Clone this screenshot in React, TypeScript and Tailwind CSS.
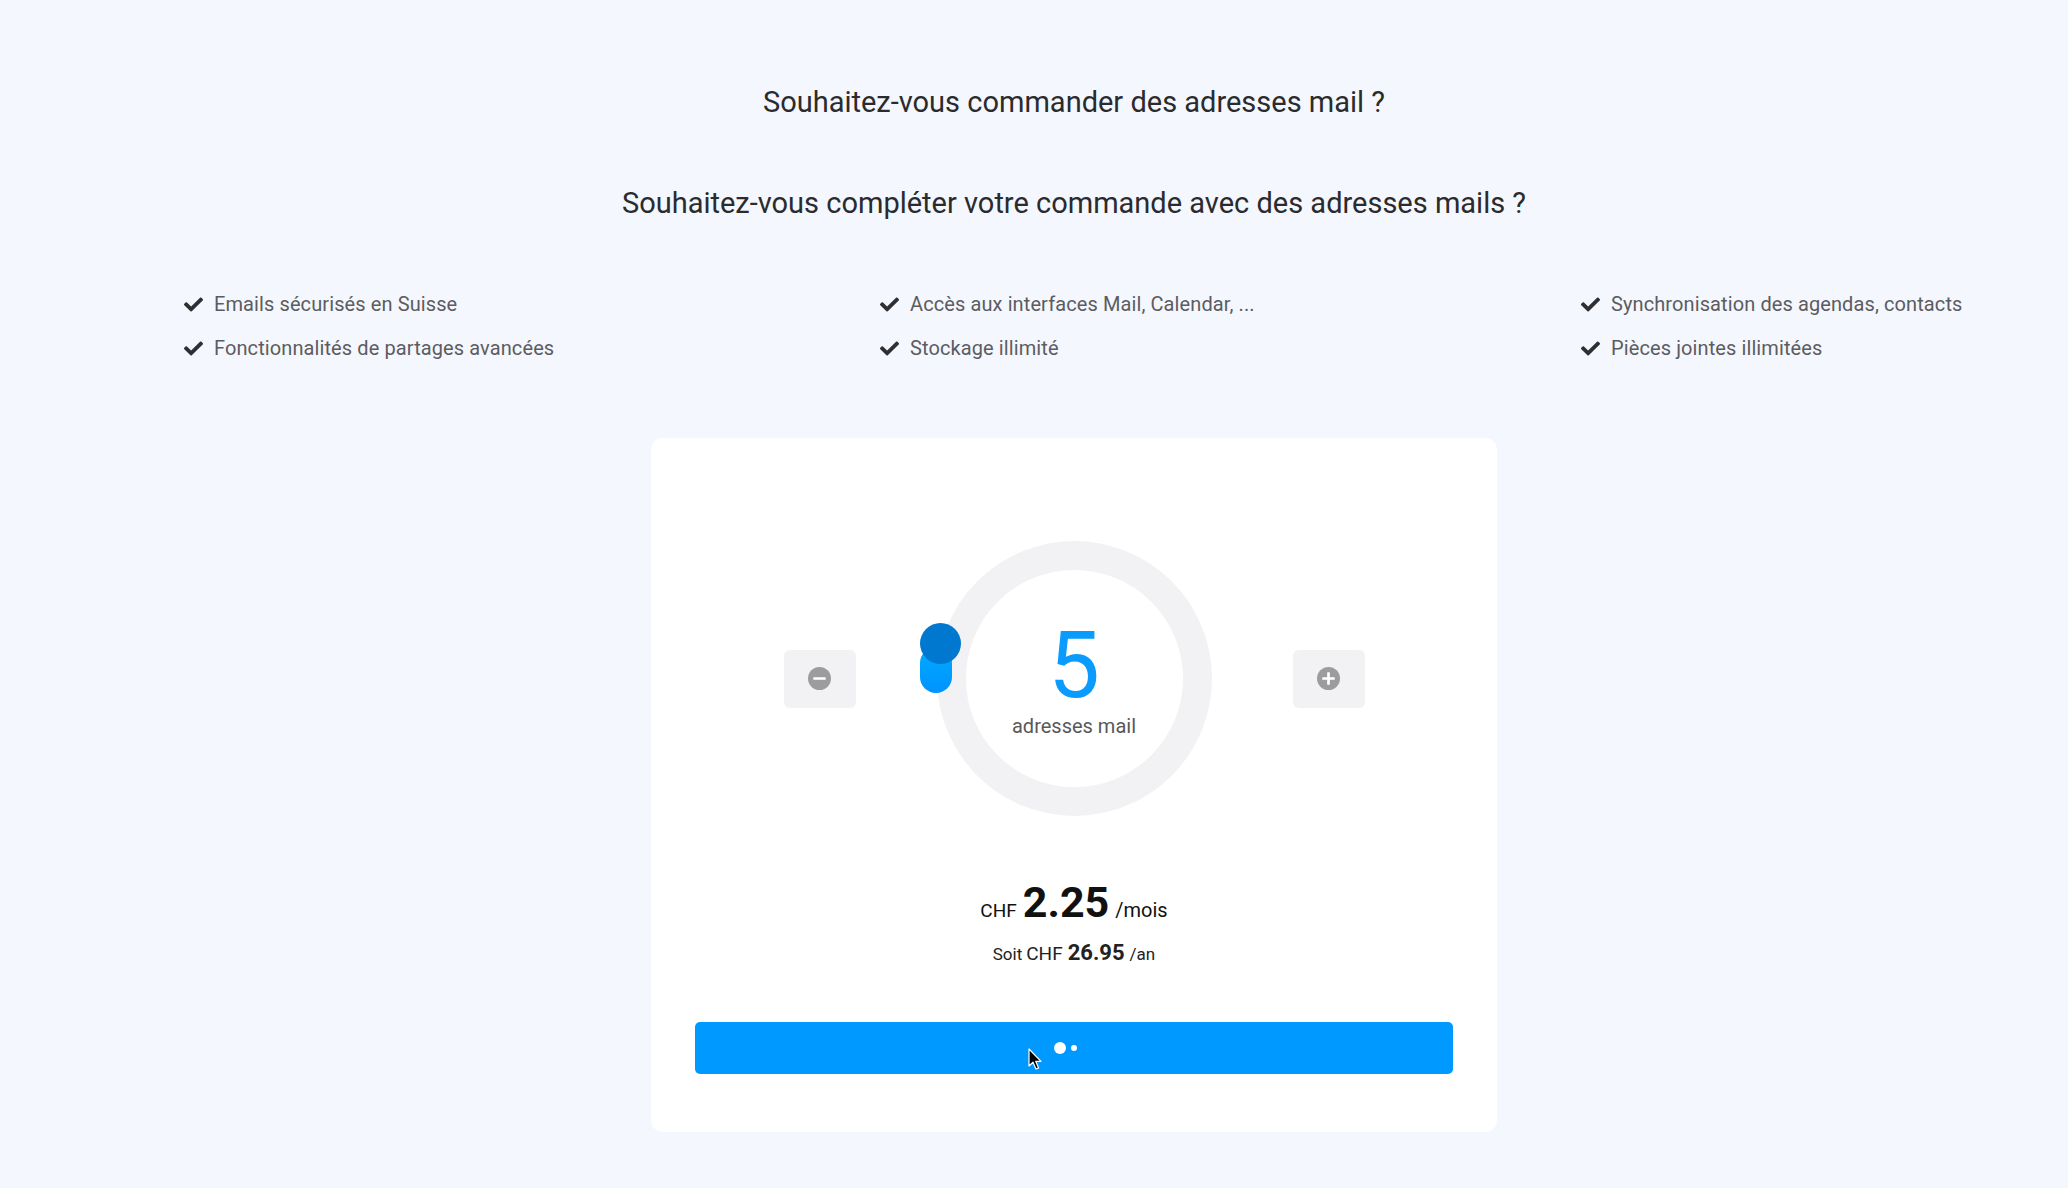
import { FaCheck } from "react-icons/fa";

const features = [
  ["Emails sécurisés en Suisse", "Accès aux interfaces Mail, Calendar, ...", "Synchronisation des agendas, contacts"],
  ["Fonctionnalités de partages avancées", "Stockage illimité", "Pièces jointes illimitées"],
];

function RoundIcon({ plus }: { plus?: boolean }) {
  return (
    <svg width="23" height="23" viewBox="0 0 24 24">
      <circle cx="12" cy="12" r="12" fill="#9c9c9e" />
      <rect x="5.5" y="10.6" width="13" height="2.8" rx="0.6" fill="#fff" />
      {plus && <rect x="10.6" y="5.5" width="2.8" height="13" rx="0.6" fill="#fff" />}
    </svg>
  );
}

function Cursor() {
  return (
    <svg width="16" height="23" viewBox="0 0 16 23" className="absolute left-[333px] top-[26px]">
      <path
        d="M1 1 L1 18 L5 14.2 L8 21 L10.6 19.9 L7.7 13.3 L13 13.3 Z"
        fill="#000"
        stroke="#fff"
        strokeWidth="1.2"
        strokeLinejoin="round"
      />
    </svg>
  );
}

export default function App() {
  return (
    <div className="min-h-screen w-full bg-[#f4f7fe] pl-[80px] pt-[85px] font-['Roboto',sans-serif]">
      {/* headings */}
      <h1 className="text-center text-[29px] leading-[34px] font-normal text-[#2b2b2d]">
        Souhaitez-vous commander des adresses mail ?
      </h1>
      <h2 className="mt-[67px] text-center text-[29px] leading-[34px] font-normal text-[#2b2b2d]">
        Souhaitez-vous compléter votre commande avec des adresses mails ?
      </h2>

      {/* features */}
      <div className="ml-[104px] mt-[70px] grid grid-cols-[696px_701px_1fr] gap-y-[16px]">
        {features.flat().map((f) => (
          <div key={f} className="flex items-center gap-[11px] text-[20px] leading-[28px] tracking-[0.1px] text-[#5c5c5f]">
            <FaCheck className="h-[19px] w-[19px] shrink-0 text-[#2f2f31]" />
            <span>{f}</span>
          </div>
        ))}
      </div>

      {/* card */}
      <div className="mx-auto mt-[76px] w-[846px] rounded-[12px] bg-white px-[44px] pt-[103px] pb-[58px]">
        <div className="flex items-center justify-center gap-[81px]">
          <button className="flex h-[58px] w-[72px] items-center justify-center rounded-[6px] bg-[#f2f2f4]">
            <RoundIcon />
          </button>

          <div className="relative h-[275px] w-[275px] rounded-full border-[29px] border-[#f2f2f4] bg-white">
            <div className="flex h-full flex-col items-center justify-center">
              <span className="text-[92px] leading-none font-normal text-[#0a9bff]">5</span>
              <span className="mt-[2px] text-[20px] leading-[24px] text-[#58585b]">adresses mail</span>
            </div>
            {/* slider handle */}
            <div className="absolute left-[-46px] top-[77px] h-[46px] w-[32px] rounded-full bg-gradient-to-b from-[#00aaff] to-[#0093ff]" />
            <div className="absolute left-[-46px] top-[53px] h-[41px] w-[41px] rounded-full bg-[#0078cf]" />
          </div>

          <button className="flex h-[58px] w-[72px] items-center justify-center rounded-[6px] bg-[#f2f2f4]">
            <RoundIcon plus />
          </button>
        </div>

        {/* price */}
        <div className="mt-[65px] flex items-baseline justify-center leading-none text-[#111]">
          <span className="text-[19px]">CHF</span>
          <span className="ml-[6px] text-[43px] font-bold">2.25</span>
          <span className="ml-[6px] text-[20px]">/mois</span>
        </div>
        <div className="mt-[18px] flex items-baseline justify-center leading-none text-[#222]">
          <span className="text-[17px]">Soit</span>
          <span className="ml-[4px] text-[19px]">CHF</span>
          <span className="ml-[5px] text-[22px] font-bold">26.95</span>
          <span className="ml-[5px] text-[17px]">/an</span>
        </div>

        {/* action */}
        <button className="relative mt-[58px] flex h-[52px] w-full items-center justify-center gap-[5px] rounded-[5px] bg-[#0099ff] pr-[17px]">
          <span className="h-[12px] w-[12px] rounded-full bg-white" />
          <span className="h-[6px] w-[6px] rounded-full bg-white" />
          <Cursor />
        </button>
      </div>
    </div>
  );
}
